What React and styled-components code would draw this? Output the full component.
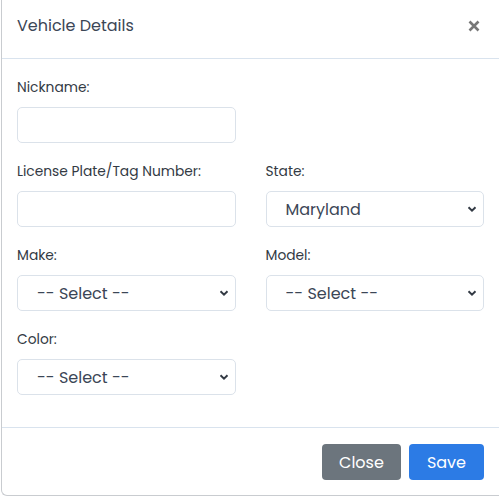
import React, { useState } from "react";
import styled, { createGlobalStyle } from "styled-components";

const GlobalStyle = createGlobalStyle`
  * { box-sizing: border-box; }
  html, body {
    margin: 0;
    padding: 0;
    background: #ffffff;
    font-family: "Poppins", "Open Sans", sans-serif;
  }
`;

const Modal = styled.div`
  margin-left: 1px;
  width: 498px;
  height: 496px;
  background: #ffffff;
  border: 1px solid #c9ccd0;
  border-top: none;
  border-right: none;
  border-radius: 0 0 0 6px;
  display: flex;
  flex-direction: column;
  overflow: hidden;
`;

const Header = styled.div`
  flex-shrink: 0;
  height: 59px;
  padding: 0 15px;
  display: flex;
  align-items: center;
  justify-content: space-between;
  border-bottom: 1px solid #d9e3ee;
`;

const Title = styled.h5`
  margin: 0 0 8px 0;
  font-size: 16px;
  font-weight: 400;
  color: #3b4656;
`;

const CloseX = styled.button`
  border: none;
  background: none;
  padding: 0;
  margin: 0 3px 7px 0;
  width: 14px;
  height: 14px;
  display: flex;
  align-items: center;
  justify-content: center;
  cursor: pointer;
`;

const Body = styled.div`
  flex-shrink: 0;
  padding: 19px 15px 13px;
  display: grid;
  grid-template-columns: 1fr 1fr;
  column-gap: 30px;
`;

const Group = styled.div`
  margin-bottom: 19px;
`;

const Label = styled.label`
  display: block;
  font-size: 13.8px;
  line-height: 20px;
  color: #333a44;
  margin-bottom: 9px;
`;

const Input = styled.input`
  display: block;
  width: 100%;
  height: 36px;
  border: 1px solid #dbe2ea;
  border-radius: 5px;
  padding: 0 15px;
  font-family: inherit;
  font-size: 15px;
  color: #3b4656;
  outline: none;
`;

const SelectWrap = styled.div`
  position: relative;
  width: 100%;
`;

const Select = styled.select`
  display: block;
  width: 100%;
  height: 36px;
  border: 1px solid #dbe2ea;
  border-radius: 5px;
  padding: 0 30px 0 19px;
  font-family: inherit;
  font-size: 16px;
  color: #3b4656;
  background: #ffffff;
  appearance: none;
  outline: none;
`;

const Chevron = styled.svg`
  position: absolute;
  right: 7px;
  top: 50%;
  transform: translateY(-50%);
  pointer-events: none;
`;

const Footer = styled.div`
  margin-top: auto;
  flex-shrink: 0;
  border-top: 1px solid #d9e3ee;
  padding: 16px 15px 16px;
  display: flex;
  justify-content: flex-end;
  gap: 8px;
`;

const Button = styled.button`
  height: 36px;
  padding: 0 ${(p) => (p.$variant === "primary" ? "18px" : "17px")};
  border: none;
  border-radius: 4px;
  font-family: inherit;
  font-size: 16px;
  color: #ffffff;
  background: ${(p) => (p.$variant === "primary" ? "#2c7be5" : "#6c757d")};
  cursor: pointer;
`;

const SelectField = ({ value, options, onChange }) => (
  <SelectWrap>
    <Select value={value} onChange={(e) => onChange(e.target.value)}>
      {options.map((o) => (
        <option key={o} value={o}>
          {o}
        </option>
      ))}
    </Select>
    <Chevron width="10" height="8" viewBox="0 0 10 8">
      <path d="M1.5 2.2 L5 5.6 L8.5 2.2" fill="none" stroke="#333a44" strokeWidth="2" />
    </Chevron>
  </SelectWrap>
);

const App = () => {
  const [form, setForm] = useState({
    nickname: "",
    plate: "",
    state: "Maryland",
    make: "-- Select --",
    model: "-- Select --",
    color: "-- Select --",
  });

  const set = (key) => (v) => setForm({ ...form, [key]: v });

  return (
    <>
      <GlobalStyle />
      <Modal>
        <Header>
          <Title>Vehicle Details</Title>
          <CloseX aria-label="Close">
            <svg width="12" height="12" viewBox="0 0 12 12">
              <path d="M1.5 1.5 L10.5 10.5 M10.5 1.5 L1.5 10.5" stroke="#777777" strokeWidth="2.6" />
            </svg>
          </CloseX>
        </Header>
        <Body>
          <Group>
            <Label>Nickname:</Label>
            <Input value={form.nickname} onChange={(e) => set("nickname")(e.target.value)} />
          </Group>
          <div />
          <Group>
            <Label>License Plate/Tag Number:</Label>
            <Input value={form.plate} onChange={(e) => set("plate")(e.target.value)} />
          </Group>
          <Group>
            <Label>State:</Label>
            <SelectField
              value={form.state}
              options={["Maryland", "Virginia", "Delaware", "District of Columbia"]}
              onChange={set("state")}
            />
          </Group>
          <Group>
            <Label>Make:</Label>
            <SelectField value={form.make} options={["-- Select --"]} onChange={set("make")} />
          </Group>
          <Group>
            <Label>Model:</Label>
            <SelectField value={form.model} options={["-- Select --"]} onChange={set("model")} />
          </Group>
          <Group>
            <Label>Color:</Label>
            <SelectField value={form.color} options={["-- Select --"]} onChange={set("color")} />
          </Group>
        </Body>
        <Footer>
          <Button>Close</Button>
          <Button $variant="primary">Save</Button>
        </Footer>
      </Modal>
    </>
  );
};

export default App;
